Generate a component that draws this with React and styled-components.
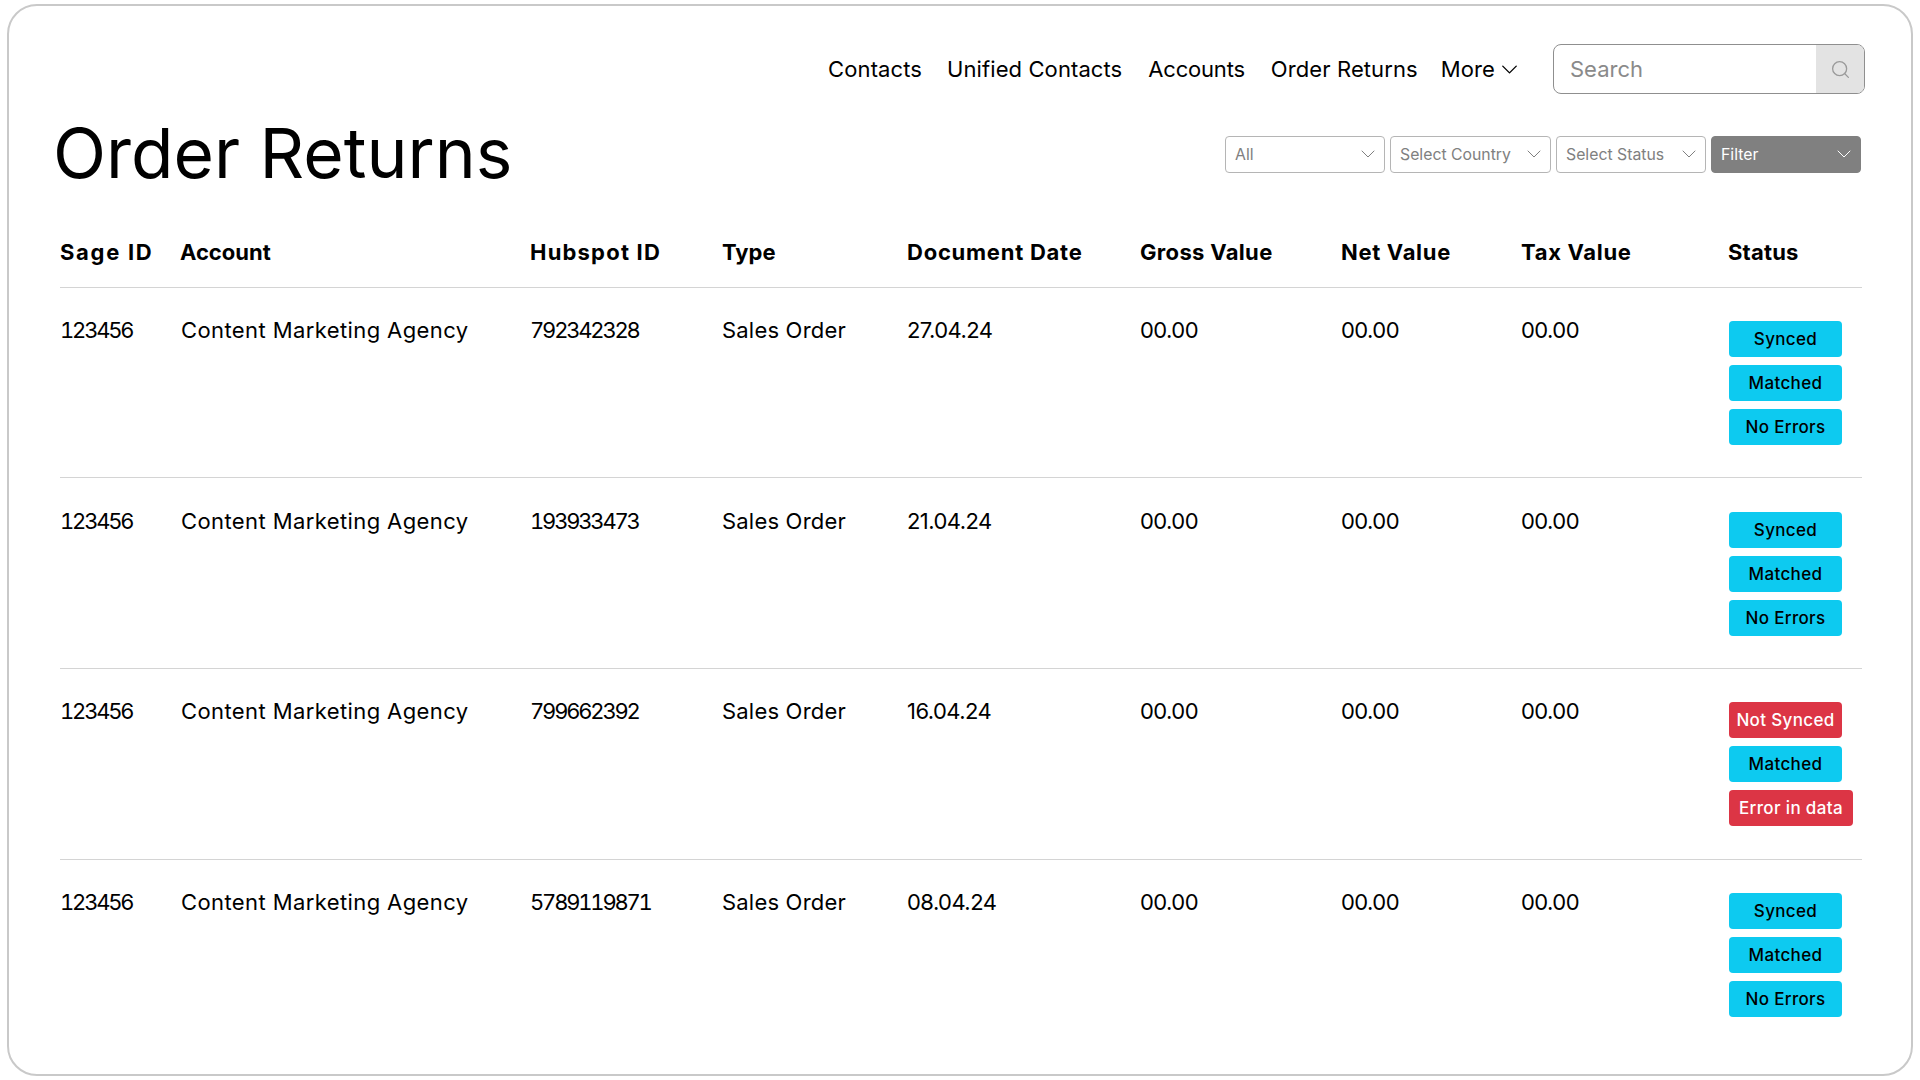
import React from "react";
import styled, { createGlobalStyle } from "styled-components";
import { ChevronDown, Search } from "lucide-react";

const Global = createGlobalStyle`
  html, body {
    margin: 0;
    background: #fff;
  }
  body {
    font-family: Inter, "Noto Sans", sans-serif;
    color: #000;
  }
`;

const Frame = styled.div`
  box-sizing: border-box;
  width: 1906px;
  height: 1072px;
  margin: 4px 0 0 7px;
  padding: 38px 49px 0 51px;
  border: 2px solid #c9c9c9;
  border-radius: 30px;
  background: #fff;
`;

const TopBar = styled.div`
  display: flex;
  justify-content: flex-end;
  align-items: center;
  height: 50px;
  margin-right: -3px;
`;

const NavLink = styled.a`
  font-size: 22px;
  line-height: 26px;
  letter-spacing: ${(p) => p.$track || 0.1}px;
  color: #000;
  margin-left: ${(p) => p.$gap}px;
  display: flex;
  align-items: center;
  gap: 1px;
`;

const SearchBox = styled.div`
  box-sizing: border-box;
  width: 312px;
  height: 50px;
  margin-left: 30px;
  display: flex;
  border: 1px solid #8f8f8f;
  border-radius: 8px;
  overflow: hidden;
`;

const SearchInput = styled.div`
  flex: 1;
  padding-left: 16px;
  font-size: 22px;
  line-height: 48px;
  color: #8a8a8a;
`;

const SearchButton = styled.div`
  width: 48px;
  display: flex;
  align-items: center;
  justify-content: center;
  background: #e3e3e3;
  color: #9a9a9a;
`;

const TitleRow = styled.div`
  display: flex;
  justify-content: space-between;
  align-items: center;
  margin-left: -7px;
  margin-top: 18px;
  height: 82px;
`;

const Title = styled.h1`
  margin: 0;
  font-size: 69.4px;
  line-height: 82px;
  font-weight: 400;
`;

const Filters = styled.div`
  display: flex;
  gap: 5px;
  margin-top: 2px;
  margin-right: 1px;
`;

const FilterSelect = styled.div`
  box-sizing: border-box;
  width: ${(p) => p.$width}px;
  height: 37px;
  padding: 0 4px 0 9px;
  display: flex;
  align-items: center;
  justify-content: space-between;
  border: 1px solid ${(p) => (p.$dark ? "#808080" : "#b5b5b5")};
  border-radius: 4px;
  font-size: 15.8px;
  background: ${(p) => (p.$dark ? "#808080" : "#fff")};
  color: ${(p) => (p.$dark ? "#fff" : "#808080")};
`;

const columns = "120px 350px 192px 185px 233px 201px 180px 207px 1fr";

const HeadRow = styled.div`
  display: grid;
  grid-template-columns: ${columns};
  align-items: center;
  height: 70px;
  margin-top: 22.5px;
  border-bottom: 1px solid #d4d4d4;
  font-size: 22px;
  font-weight: 700;
`;

const HeadCell = styled.div`
  letter-spacing: ${(p) => p.$track}px;
`;

const Row = styled.div`
  box-sizing: border-box;
  display: grid;
  grid-template-columns: ${columns};
  align-items: start;
  height: 190.7px;
  padding-top: 29.4px;
  font-size: 22px;
  line-height: 26px;
  border-bottom: ${(p) => (p.$last ? "none" : "1px solid #d4d4d4")};
`;

const TextCell = styled.div`
  letter-spacing: ${(p) => p.$track}px;
  padding-left: ${(p) => p.$inset || 0}px;
`;

// the ids have evenly wide digits in the design
const IdCell = styled.div`
  font-variant-numeric: tabular-nums;
  letter-spacing: -2.2px;
`;

const ValueCell = styled.div`
  letter-spacing: -0.55px;
`;

const StatusList = styled.div`
  display: flex;
  flex-direction: column;
  align-items: flex-start;
  gap: 8px;
  margin: 4px 0 0 1px;
`;

const Badge = styled.span`
  box-sizing: border-box;
  min-width: 113px;
  height: 36px;
  padding: 0 ${(p) => (p.$wide ? 10 : 7)}px;
  display: flex;
  align-items: center;
  justify-content: center;
  border-radius: 4px;
  font-size: 17px;
  font-weight: 500;
  letter-spacing: 0.35px;
  background: ${(p) => (p.$error ? "#dc3545" : "#0dcaf0")};
  color: ${(p) => (p.$error ? "#fff" : "#000")};
`;

const headers = [
  { label: "Sage ID", track: 1.7 },
  { label: "Account", track: 0 },
  { label: "Hubspot ID", track: 1.2 },
  { label: "Type", track: 0 },
  { label: "Document Date", track: 0.75 },
  { label: "Gross Value", track: 0.33 },
  { label: "Net Value", track: 0.68 },
  { label: "Tax Value", track: 0.68 },
  { label: "Status", track: 0.2 },
];

const rows = [
  { hubspot: "792342328", date: "27.04.24", status: ["Synced", "Matched", "No Errors"] },
  { hubspot: "193933473", date: "21.04.24", status: ["Synced", "Matched", "No Errors"] },
  { hubspot: "799662392", date: "16.04.24", status: ["Not Synced", "Matched", "Error in data"] },
  { hubspot: "5789119871", date: "08.04.24", status: ["Synced", "Matched", "No Errors"] },
];

const isError = (s) => s === "Not Synced" || s === "Error in data";

const App = () => {
  return (
    <Frame>
      <Global />
      <TopBar>
        <NavLink $gap={0}>Contacts</NavLink>
        <NavLink $gap={25}>Unified Contacts</NavLink>
        <NavLink $gap={26} $track={-0.2}>
          Accounts
        </NavLink>
        <NavLink $gap={26}>Order Returns</NavLink>
        <NavLink $gap={23}>
          More <ChevronDown size={27} strokeWidth={1.2} />
        </NavLink>
        <SearchBox>
          <SearchInput>Search</SearchInput>
          <SearchButton>
            <Search size={21} strokeWidth={1.5} />
          </SearchButton>
        </SearchBox>
      </TopBar>
      <TitleRow>
        <Title>Order Returns</Title>
        <Filters>
          <FilterSelect $width={160}>
            All <ChevronDown size={24} strokeWidth={1} />
          </FilterSelect>
          <FilterSelect $width={161}>
            Select Country <ChevronDown size={24} strokeWidth={1} />
          </FilterSelect>
          <FilterSelect $width={150}>
            Select Status <ChevronDown size={24} strokeWidth={1} />
          </FilterSelect>
          <FilterSelect $width={150} $dark>
            Filter <ChevronDown size={24} strokeWidth={1} />
          </FilterSelect>
        </Filters>
      </TitleRow>
      <HeadRow>
        {headers.map((h) => (
          <HeadCell key={h.label} $track={h.track}>
            {h.label}
          </HeadCell>
        ))}
      </HeadRow>
      {rows.map((r, i) => (
        <Row key={r.hubspot} $last={i === rows.length - 1}>
          <IdCell>123456</IdCell>
          <TextCell $track={0.4} $inset={1}>
            Content Marketing Agency
          </TextCell>
          <IdCell>{r.hubspot}</IdCell>
          <TextCell $track={0.2}>Sales Order</TextCell>
          <ValueCell>{r.date}</ValueCell>
          <ValueCell>00.00</ValueCell>
          <ValueCell>00.00</ValueCell>
          <ValueCell>00.00</ValueCell>
          <StatusList>
            {r.status.map((s) => (
              <Badge key={s} $error={isError(s)} $wide={s === "Error in data"}>
                {s}
              </Badge>
            ))}
          </StatusList>
        </Row>
      ))}
    </Frame>
  );
};

export default App;
